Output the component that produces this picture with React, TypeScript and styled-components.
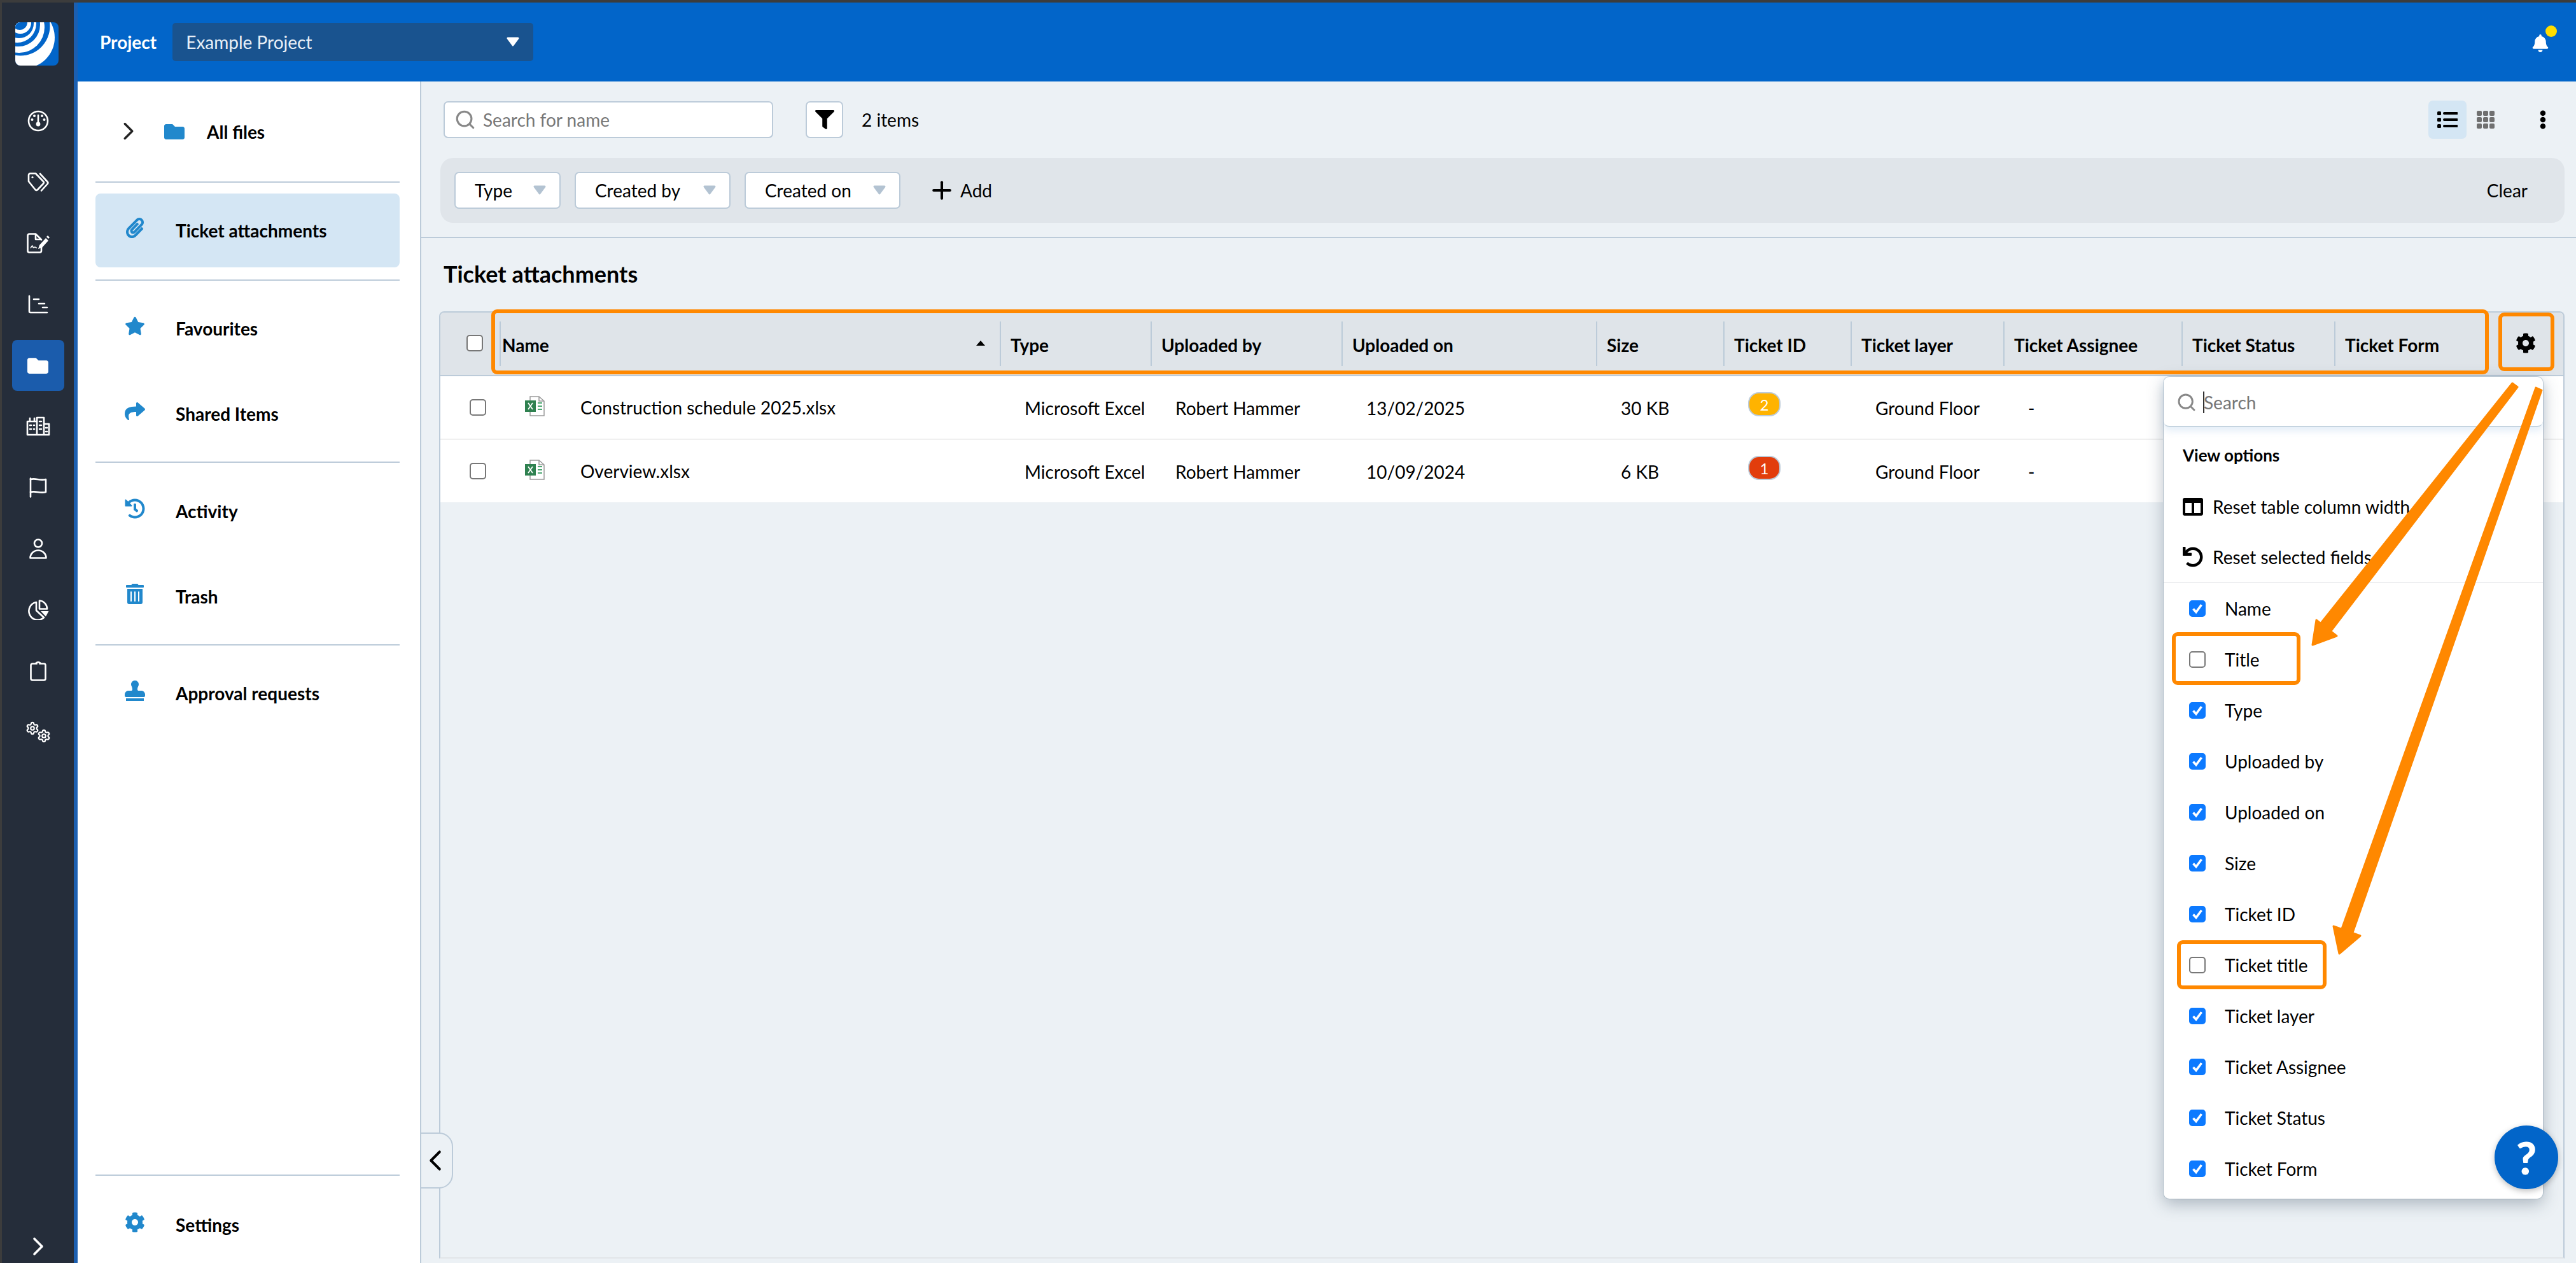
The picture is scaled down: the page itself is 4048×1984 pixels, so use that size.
import React from "react";
import styled, { createGlobalStyle } from "styled-components";
import {
  FaFolder, FaPaperclip, FaStar, FaShare, FaHistory, FaTrashAlt, FaStamp, FaCog,
  FaFilter, FaBell, FaEllipsisV, FaColumns, FaUndo,
} from "react-icons/fa";
import { Search, Settings, Plus, ChevronRight, ChevronLeft } from "lucide-react";

const Global = createGlobalStyle`
  html, body { margin: 0; padding: 0; background: #ecf1f5; }
  * { box-sizing: border-box; }
  body { font-family: Lato, "Liberation Sans", sans-serif; color: #000; }
`;

const Root = styled.div`
  position: relative;
  width: 4048px;
  height: 1984px;
  overflow: hidden;
  display: flex;
  background: #3c3c3c;
  padding: 4px 0 0 3px;
`;
const Rail = styled.nav`
  width: 119px;
  flex: none;
  display: flex;
  flex-direction: column;
  align-items: center;
  background: #252d3a;
  border-right: 6px solid #1c5fb0;
`;
const Logo = styled.svg`
  width: 68px;
  height: 68px;
  margin: 31px 0 39px -4px;
  flex: none;
  border-radius: 8px;
  display: block;
`;
const RailSlot = styled.div<{ $active?: boolean }>`
  width: 82px;
  height: 96px;
  display: flex;
  align-items: center;
  justify-content: center;
  color: #fff;
  flex: none;
  position: relative;
  &::before {
    content: "";
    display: ${(p) => (p.$active ? "block" : "none")};
    position: absolute;
    left: 0;
    right: 0;
    top: 8px;
    bottom: 8px;
    background: #1b5cac;
    border-radius: 8px;
  }
  > * { position: relative; }
`;
const RailExpand = styled.div`
  margin-top: auto;
  height: 50px;
  color: #fff;
`;
const Right = styled.div`
  flex: 1;
  min-width: 0;
  display: flex;
  flex-direction: column;
`;
const TopBar = styled.header`
  height: 124px;
  flex: none;
  background: #0265c9;
  display: flex;
  align-items: center;
  padding: 0 40px 0 35px;
  color: #fff;
`;
const ProjectLabel = styled.span`
  font-size: 28px;
  font-weight: 700;
  margin-right: 25px;
`;
const ProjectSelect = styled.div`
  width: 567px;
  height: 60px;
  background: #19538f;
  border-radius: 5px;
  display: flex;
  align-items: center;
  justify-content: space-between;
  padding: 0 21px;
  font-size: 28px;
  color: #e8eff7;
`;
const BellWrap = styled.div`
  margin-left: auto;
  position: relative;
  width: 28px;
  height: 30px;
  margin-right: 2px;
  margin-top: 5px;
`;
const BellDot = styled.span`
  position: absolute;
  left: 22px;
  top: -14px;
  width: 18px;
  height: 18px;
  border-radius: 50%;
  background: #ffdd00;
`;
const Body = styled.div`
  flex: 1;
  min-height: 0;
  display: flex;
`;
const Sidebar = styled.aside`
  width: 540px;
  flex: none;
  background: #fff;
  border-right: 2px solid #bccbd9;
  padding: 0 32px 0 28px;
  display: flex;
  flex-direction: column;
`;
const Divider = styled.hr<{ $top?: number }>`
  border: 0;
  height: 2px;
  flex: none;
  background: #bccbd9;
  margin: ${(p) => p.$top ?? 0}px 0 0;
`;
const NavItem = styled.div<{ $h?: number; $top?: number; $active?: boolean }>`
  height: ${(p) => p.$h ?? 134}px;
  margin-top: ${(p) => p.$top ?? 0}px;
  flex: none;
  display: flex;
  align-items: center;
  padding-left: 45px;
  border-radius: 8px;
  background: ${(p) => (p.$active ? "#d4e6f4" : "transparent")};
  font-size: 28px;
  font-weight: 700;
  color: #000;
`;
const NavIcon = styled.span`
  width: 34px;
  margin-right: 47px;
  margin-bottom: 8px;
  display: flex;
  justify-content: center;
  color: #2188cc;
  font-size: 32px;
  flex: none;
`;
const AllFilesChevron = styled.span`
  width: 46px;
  margin-left: -16px;
  margin-right: 33px;
  color: #222;
  display: flex;
  justify-content: center;
  margin-top: -2px;
`;
const FolderIcon = styled.span`
  color: #2188cc;
  font-size: 32px;
  margin-right: 35px;
  display: flex;
`;
const SidebarFooter = styled.div`
  margin-top: auto;
`;
const Main = styled.main`
  flex: 1;
  min-width: 0;
  display: flex;
  flex-direction: column;
  background: #ecf1f5;
`;
const TopSection = styled.section`
  padding: 31px 18px 22px 30px;
  border-bottom: 2px solid #bccbd9;
  flex: none;
`;
const Toolbar = styled.div`
  height: 58px;
  padding-left: 5px;
  display: flex;
  align-items: center;
`;
const SearchBox = styled.div`
  width: 518px;
  height: 58px;
  background: #fff;
  border: 2px solid #bccbd9;
  border-radius: 7px;
  display: flex;
  align-items: center;
  padding-left: 15px;
  color: #777;
  font-size: 28px;
  gap: 11px;
`;
const FilterButton = styled.div`
  width: 59px;
  height: 58px;
  margin-left: 51px;
  background: #fff;
  border: 2px solid #bccbd9;
  border-radius: 7px;
  display: flex;
  align-items: center;
  justify-content: center;
  font-size: 30px;
`;
const ItemCount = styled.span`
  margin-left: 29px;
  font-size: 28px;
`;
const ViewTools = styled.div`
  margin-left: auto;
  display: flex;
  align-items: center;
`;
const ToggleActive = styled.div`
  width: 60px;
  height: 60px;
  border-radius: 7px;
  background: #d4e6f4;
  display: flex;
  align-items: center;
  justify-content: center;
`;
const ToggleIdle = styled.div`
  width: 60px;
  height: 60px;
  display: flex;
  align-items: center;
  justify-content: center;
`;
const KebabSlot = styled.div`
  width: 60px;
  height: 60px;
  margin-left: 30px;
  margin-right: 4px;
  display: flex;
  align-items: center;
  justify-content: center;
  font-size: 30px;
`;
const FilterBar = styled.div`
  margin-top: 31px;
  height: 102px;
  background: #e0e5ea;
  border-radius: 20px;
  display: flex;
  align-items: center;
  padding: 0 58px 0 22px;
`;
const Chip = styled.div<{ $w: number }>`
  width: ${(p) => p.$w}px;
  height: 58px;
  margin-right: 22px;
  background: #fff;
  border: 2px solid #bccbd9;
  border-radius: 7px;
  padding: 0 20px 0 30px;
  display: flex;
  align-items: center;
  justify-content: space-between;
  font-size: 28px;
`;
const AddButton = styled.div`
  margin-left: 21px;
  display: flex;
  align-items: center;
  gap: 7px;
  font-size: 28px;
`;
const ClearButton = styled.div`
  margin-left: auto;
  font-size: 28px;
`;
const Title = styled.h1`
  flex: none;
  height: 115px;
  margin: 0;
  padding: 0 0 3px 35px;
  display: flex;
  align-items: center;
  font-size: 36px;
  font-weight: 700;
`;
const TableBox = styled.section`
  flex: 1;
  min-height: 0;
  margin: 0 18px 7px 28px;
  border: 2px solid #bccbd9;
  border-bottom-color: #e2e5e8;
  border-radius: 8px 8px 0 0;
`;
const grid = "93px 786px 237px 300px 400px 200px 200px 240px 280px 240px 240px 1fr";
const HeaderRow = styled.div`
  display: grid;
  grid-template-columns: ${grid};
  height: 100px;
  background: #dfe4e9;
  border-bottom: 2px solid #bccbd9;
  border-radius: 6px 6px 0 0;
`;
const HeaderFirst = styled.div`
  display: flex;
  align-items: center;
  padding: 0 0 2px 41px;
`;
const HeaderCell = styled.div<{ $tight?: boolean }>`
  margin: 14px 0 14px;
  border-left: 2px solid #bccbd9;
  padding: 3px 16px 0 ${(p) => (p.$tight ? 2 : 15)}px;
  display: flex;
  align-items: center;
  justify-content: space-between;
  font-size: 28px;
  font-weight: 700;
  white-space: nowrap;
`;
const SortMark = styled.span`
  width: 0;
  height: 0;
  border-left: 7px solid transparent;
  border-right: 7px solid transparent;
  border-bottom: 8px solid #000;
  margin: -5px 7px 0 0;
`;
const GearCell = styled.div`
  display: flex;
  align-items: center;
  justify-content: flex-start;
  padding: 0 0 2px 45px;
  font-size: 32px;
`;
const DataRow = styled.div`
  display: grid;
  grid-template-columns: ${grid};
  height: 98px;
  background: #fff;
  box-sizing: content-box;
  & + & { border-top: 2px solid #f0f0f0; }
`;
const Box = styled.span<{ $checked?: boolean }>`
  width: 26px;
  height: 26px;
  flex: none;
  border-radius: 5px;
  border: 2px solid ${(p) => (p.$checked ? "#0d7aff" : "#777")};
  background: ${(p) => (p.$checked ? "#0d7aff" : "#fff")};
  display: flex;
  align-items: center;
  justify-content: center;
`;
const RowFirst = styled.div`
  display: flex;
  align-items: center;
  padding-left: 46px;
`;
const RowName = styled.div`
  display: flex;
  align-items: center;
  padding-left: 39px;
  font-size: 28px;
  white-space: nowrap;
`;
const RowFileIcon = styled.svg`
  width: 33px;
  height: 32px;
  margin-right: 55px;
  margin-bottom: 4px;
  flex: none;
`;
const Cell = styled.div`
  display: flex;
  align-items: center;
  padding-left: 39px;
  font-size: 28px;
  white-space: nowrap;
  padding-top: 2px;
`;
const Badge = styled.span<{ $bg: string }>`
  width: 51px;
  height: 38px;
  border-radius: 17px;
  border: 2px solid #bccbd9;
  background: ${(p) => p.$bg};
  color: #fff;
  font-size: 24px;
  display: flex;
  align-items: center;
  justify-content: center;
  margin-bottom: 12px;
`;
const CollapseTab = styled.div`
  position: absolute;
  left: 660px;
  top: 1779px;
  width: 52px;
  height: 88px;
  background: #ecf1f5;
  border: 2px solid #bccbd9;
  border-radius: 0 22px 22px 0;
  display: flex;
  align-items: center;
  justify-content: center;
  padding-right: 4px;
  overflow: hidden;
  svg { flex: none; }
`;
const Menu = styled.div`
  position: absolute;
  left: 3400px;
  top: 592px;
  width: 596px;
  height: 1291px;
  background: #fff;
  border-radius: 9px;
  box-shadow: 0 8px 26px rgba(50, 70, 90, 0.35), 0 0 0 1px #ccd7e0;
  display: flex;
  flex-direction: column;
`;
const MenuSearch = styled.div`
  height: 79px;
  flex: none;
  padding: 2px 0 0 20px;
  border-bottom: 2px solid #c5d4e0;
  border-radius: 9px;
  box-shadow: 0 6px 12px rgba(120, 170, 220, 0.2);
  display: flex;
  align-items: center;
  font-size: 28px;
  color: #777;
`;
const Caret = styled.span`
  width: 2px;
  height: 34px;
  background: #333;
  margin: 0 -1px 0 10px;
`;
const MenuTitle = styled.div`
  height: 85px;
  flex: none;
  padding: 3px 0 0 30px;
  display: flex;
  align-items: center;
  font-size: 26px;
  font-weight: 700;
`;
const MenuAction = styled.div`
  height: 79px;
  flex: none;
  padding-left: 30px;
  display: flex;
  align-items: center;
  gap: 15px;
  font-size: 28px;
`;
const MenuActionIcon = styled.span`
  width: 32px;
  display: flex;
  justify-content: center;
  font-size: 32px;
  flex: none;
`;
const MenuDivider = styled.hr`
  border: 0;
  height: 2px;
  margin: 0;
  flex: none;
  background: #eeeff1;
`;
const MenuRow = styled.label`
  height: 80px;
  flex: none;
  padding-left: 40px;
  display: flex;
  align-items: center;
  gap: 30px;
  font-size: 28px;
`;
const Frame = styled.div<{ $l: number; $t: number; $w: number; $h: number }>`
  position: absolute;
  left: ${(p) => p.$l}px;
  top: ${(p) => p.$t}px;
  width: ${(p) => p.$w}px;
  height: ${(p) => p.$h}px;
  border: 6px solid #ff8800;
  border-radius: 9px;
  pointer-events: none;
`;
const ArrowLayer = styled.svg`
  position: absolute;
  left: 0;
  top: 0;
  width: 4048px;
  height: 1984px;
  pointer-events: none;
`;
const HelpButton = styled.div`
  position: absolute;
  left: 3920px;
  top: 1768px;
  width: 100px;
  height: 100px;
  border-radius: 50%;
  background: #0265c9;
  box-shadow: 0 3px 10px rgba(0, 0, 0, 0.25);
  color: #fff;
  font-size: 70px;
  font-weight: 900;
  display: flex;
  align-items: center;
  justify-content: center;
`;

const Triangle = ({ color, w = 22 }: { color: string; w?: number }) => (
  <svg width={w} height={w * 0.7} viewBox="0 0 22 15.4">
    <path d="M3 2h16l-8 11z" fill={color} stroke={color} strokeWidth="3" strokeLinejoin="round" />
  </svg>
);
const Check = () => (
  <svg width="20" height="20" viewBox="0 0 20 20">
    <path d="M3.5 10.5l4.5 5L16.5 4" fill="none" stroke="#fff" strokeWidth="3.6" />
  </svg>
);
const line = { fill: "none", stroke: "#fff", strokeWidth: 2.6, strokeLinecap: "round" as const, strokeLinejoin: "round" as const };

const RailIcons: React.ReactNode[] = [
  <svg width="34" height="34" viewBox="0 0 34 34" key="d">
    <circle cx="17" cy="17" r="15" {...line} />
    <path d="M17 8v12" {...line} />
    <circle cx="17" cy="22" r="3.400" fill="#fff" />
    <circle cx="7.500" cy="15" r="2" fill="#fff" /><circle cx="11" cy="9" r="2" fill="#fff" />
    <circle cx="23" cy="9" r="2" fill="#fff" /><circle cx="26.500" cy="15" r="2" fill="#fff" />
  </svg>,
  <svg width="34" height="30" viewBox="0 0 34 30" key="t">
    <path d="M2 4a2.500 2.500 0 0 1 2.500-2.500H13l12 12.500a2.500 2.500 0 0 1 0 3.500l-9 9.500a2.500 2.500 0 0 1-3.500 0L2 14z" {...line} />
    <circle cx="8" cy="7.500" r="1.600" fill="#fff" />
    <path d="M20 2l11.500 12.500a2.500 2.500 0 0 1 0 3.500L22 28.500" {...line} />
  </svg>,
  <svg width="36" height="32" viewBox="0 0 36 32" key="s">
    <path d="M23 18v10a2.500 2.500 0 0 1-2.500 2.500h-17A2.500 2.500 0 0 1 1.500 28V4A2.500 2.500 0 0 1 4 1.500h10l9 9" {...line} />
    <path d="M14 2v8h8" {...line} />
    <path d="M6 24c2-4 3-5 3.500-3s1 3 2.500 1.500 2 1 4 1" fill="none" stroke="#fff" strokeWidth="1.600" />
    <path d="M18 25l2-6L30 8l4 4-10 11z" fill="#fff" />
    <path d="M31 6l2-2 3 3-2 2z" fill="#fff" />
  </svg>,
  <svg width="32" height="30" viewBox="0 0 32 30" key="g">
    <path d="M2 2v24a2 2 0 0 0 2 2h26" {...line} />
    <path d="M9 7h8M17 14h9M23 20h7" {...line} />
  </svg>,
  <FaFolder size={33} key="f" color="#fff" />,
  <svg width="40" height="32" viewBox="0 0 40 32" key="b">
    <path d="M3 8h15v21H3zM18 2h11v27H18zM29 12h8v17h-8z" {...line} />
    <path d="M7 3v5M14 3v5" {...line} />
    <path d="M7 14h2M13 14h1M7 20h2M13 20h1M22 8h3M22 14h3M22 20h3M32 18h2M32 24h2" {...line} />
  </svg>,
  <svg width="28" height="32" viewBox="0 0 28 32" key="fl">
    <path d="M2 1.500v29" {...line} />
    <path d="M2 3c8-2.500 14 2.500 24 0v20c-10 2.500-16-2.500-24 0" {...line} />
  </svg>,
  <svg width="28" height="32" viewBox="0 0 28 32" key="p">
    <circle cx="14" cy="7.500" r="6" {...line} />
    <path d="M1.500 30.500a12.500 12 0 0 1 25 0z" {...line} />
  </svg>,
  <svg width="36" height="32" viewBox="0 0 36 32" key="pc">
    <path d="M15 4a14 14 0 1 0 12 24L15 17z" {...line} />
    <path d="M20 1.500a13 13 0 0 1 12 13H20z" {...line} />
    <path d="M22 18h12.500l-4.500 8.500z" fill="#fff" />
  </svg>,
  <svg width="26" height="32" viewBox="0 0 26 32" key="c">
    <rect x="1.500" y="4.500" width="23" height="26" rx="2.500" {...line} />
    <path d="M8 4.500c0-2 3-3.500 5-3.500s5 1.500 5 3.500z" fill="#fff" />
    <circle cx="13" cy="5" r="1.500" fill="#252d3a" />
  </svg>,
  <svg width="40" height="34" viewBox="0 0 40 34" key="gg">
    <Settings x={0} y={0} width={22} height={22} stroke="#fff" strokeWidth={2.4} />
    <Settings x={18} y={12} width={22} height={22} stroke="#fff" strokeWidth={2.4} />
  </svg>,
];

const Excel = () => (
  <RowFileIcon viewBox="0 0 33 32">
    <path d="M9 1h14l8 7v23H9z" fill="#fff" stroke="#9a9a9a" strokeWidth="1.500" />
    <path d="M23 1v7h8" fill="none" stroke="#9a9a9a" strokeWidth="1.500" />
    <rect x="1" y="7" width="17" height="18" fill="#2f8150" />
    <path d="M6 11l7 10M13 11l-7 10" stroke="#fff" strokeWidth="1.800" />
    <path d="M21 11h7M21 16h7M21 21h7" stroke="#4ea873" strokeWidth="1.800" />
  </RowFileIcon>
);

const columns = ["Type", "Uploaded by", "Uploaded on", "Size", "Ticket ID", "Ticket layer", "Ticket Assignee", "Ticket Status", "Ticket Form"];
const rows = [
  { name: "Construction schedule 2025.xlsx", date: "13/02/2025", size: "30 KB", id: "2", bg: "#ffb300" },
  { name: "Overview.xlsx", date: "10/09/2024", size: "6 KB", id: "1", bg: "#e23d0c" },
];
const fields: [string, boolean][] = [
  ["Name", true], ["Title", false], ["Type", true], ["Uploaded by", true], ["Uploaded on", true], ["Size", true],
  ["Ticket ID", true], ["Ticket title", false], ["Ticket layer", true], ["Ticket Assignee", true], ["Ticket Status", true], ["Ticket Form", true],
];

export default function App() {
  return (
    <Root>
      <Global />
      <Rail>
        <Logo viewBox="0 0 68 68">
          <rect width="68" height="68" fill="#0265c9" />
          <circle cx="14" cy="24" r="48" fill="#fff" />
          <circle cx="8" cy="6" r="46.500" fill="#0265c9" />
          <circle cx="6" cy="8" r="40" fill="#fff" />
          <circle cx="5" cy="4" r="34" fill="#0265c9" />
          <circle cx="3" cy="2" r="30" fill="#fff" />
          <circle cx="6" cy="2" r="23" fill="#0265c9" />
          <circle cx="8" cy="1" r="17" fill="#fff" />
          <circle cx="7" cy="0" r="12" fill="#0265c9" />
        </Logo>
        {RailIcons.map((ic, i) => (
          <RailSlot key={i} $active={i === 4}>{ic}</RailSlot>
        ))}
        <RailExpand><ChevronRight size={48} strokeWidth={1.8} /></RailExpand>
      </Rail>
      <Right>
        <TopBar>
          <ProjectLabel>Project</ProjectLabel>
          <ProjectSelect>Example Project <Triangle color="#fff" /></ProjectSelect>
          <BellWrap>
            <FaBell size={28} color="#fff" />
            <BellDot />
          </BellWrap>
        </TopBar>
        <Body>
          <Sidebar>
            <NavItem $h={157}>
              <AllFilesChevron><ChevronRight size={46} strokeWidth={1.8} /></AllFilesChevron>
              <FolderIcon><FaFolder /></FolderIcon>
              All files
            </NavItem>
            <Divider />
            <NavItem $h={116} $top={17} $active>
              <NavIcon><FaPaperclip /></NavIcon>Ticket attachments
            </NavItem>
            <Divider $top={19} />
            <NavItem $top={8}><NavIcon><FaStar /></NavIcon>Favourites</NavItem>
            <NavItem><NavIcon><FaShare /></NavIcon>Shared Items</NavItem>
            <Divider $top={8} />
            <NavItem $top={9}><NavIcon><FaHistory /></NavIcon>Activity</NavItem>
            <NavItem><NavIcon><FaTrashAlt /></NavIcon>Trash</NavItem>
            <Divider $top={8} />
            <NavItem $top={8}><NavIcon><FaStamp /></NavIcon>Approval requests</NavItem>
            <SidebarFooter>
              <Divider />
              <NavItem $h={121} $top={16}><NavIcon><FaCog /></NavIcon>Settings</NavItem>
            </SidebarFooter>
          </Sidebar>
          <Main>
            <TopSection>
              <Toolbar>
                <SearchBox><Search size={34} color="#888" strokeWidth={2.2} />Search for name</SearchBox>
                <FilterButton><FaFilter /></FilterButton>
                <ItemCount>2 items</ItemCount>
                <ViewTools>
                  <ToggleActive>
                    <svg width="32" height="28" viewBox="0 0 32 28">
                      <path d="M11 4h20M11 14h20M11 24h20" stroke="#000" strokeWidth="4" strokeLinecap="round" />
                      <rect x="0" y="1" width="6" height="6" rx="1.500" /><rect x="0" y="11" width="6" height="6" rx="1.500" /><rect x="0" y="21" width="6" height="6" rx="1.500" />
                    </svg>
                  </ToggleActive>
                  <ToggleIdle>
                    <svg width="28" height="28" viewBox="0 0 28 28" fill="#707070">
                      {[0, 10, 20].flatMap((y) => [0, 10, 20].map((x) => <rect key={`${x}-${y}`} x={x} y={y} width="8" height="8" rx="2" />))}
                    </svg>
                  </ToggleIdle>
                  <KebabSlot><FaEllipsisV /></KebabSlot>
                </ViewTools>
              </Toolbar>
              <FilterBar>
                <Chip $w={167}>Type <Triangle color="#b3c3d2" /></Chip>
                <Chip $w={245}>Created by <Triangle color="#b3c3d2" /></Chip>
                <Chip $w={245}>Created on <Triangle color="#b3c3d2" /></Chip>
                <AddButton><Plus size={44} strokeWidth={2.2} />Add</AddButton>
                <ClearButton>Clear</ClearButton>
              </FilterBar>
            </TopSection>
            <Title>Ticket attachments</Title>
            <TableBox>
              <HeaderRow>
                <HeaderFirst><Box /></HeaderFirst>
                <HeaderCell $tight>Name<SortMark /></HeaderCell>
                {columns.map((c) => <HeaderCell key={c}>{c}</HeaderCell>)}
                <GearCell><FaCog /></GearCell>
              </HeaderRow>
              {rows.map((r) => (
                <DataRow key={r.name}>
                  <RowFirst><Box /></RowFirst>
                  <RowName><Excel />{r.name}</RowName>
                  <Cell>Microsoft Excel</Cell>
                  <Cell>Robert Hammer</Cell>
                  <Cell>{r.date}</Cell>
                  <Cell>{r.size}</Cell>
                  <Cell><Badge $bg={r.bg}>{r.id}</Badge></Cell>
                  <Cell>Ground Floor</Cell>
                  <Cell>-</Cell>
                </DataRow>
              ))}
            </TableBox>
          </Main>
        </Body>
      </Right>
      <CollapseTab><ChevronLeft size={54} strokeWidth={1.8} /></CollapseTab>
      <Menu>
        <MenuSearch><Search size={32} color="#888" strokeWidth={2.2} /><Caret />Search</MenuSearch>
        <MenuTitle>View options</MenuTitle>
        <MenuAction><MenuActionIcon><FaColumns /></MenuActionIcon>Reset table column width</MenuAction>
        <MenuAction><MenuActionIcon><FaUndo /></MenuActionIcon>Reset selected fields</MenuAction>
        <MenuDivider />
        {fields.map(([f, on]) => (
          <MenuRow key={f}><Box $checked={on}>{on && <Check />}</Box>{f}</MenuRow>
        ))}
      </Menu>
      <Frame $l={772} $t={486} $w={3139} $h={102} />
      <Frame $l={3926} $t={491} $w={88} $h={92} />
      <Frame $l={3413} $t={993} $w={202} $h={83} />
      <Frame $l={3421} $t={1477} $w={235} $h={77} />
      <ArrowLayer viewBox="0 0 4048 1984">
        <g fill="#ff8800" stroke="#ff8800" strokeWidth="3" strokeLinejoin="round">
          <polygon points="3956,608 3948,602 3647,979 3663,991" />
          <polygon points="3634,1013 3640,974 3672,999" />
          <polygon points="3994,613 3985,609 3680,1459 3697,1465" />
          <polygon points="3676,1498 3667,1455 3709,1470" />
        </g>
      </ArrowLayer>
      <HelpButton>?</HelpButton>
    </Root>
  );
}
